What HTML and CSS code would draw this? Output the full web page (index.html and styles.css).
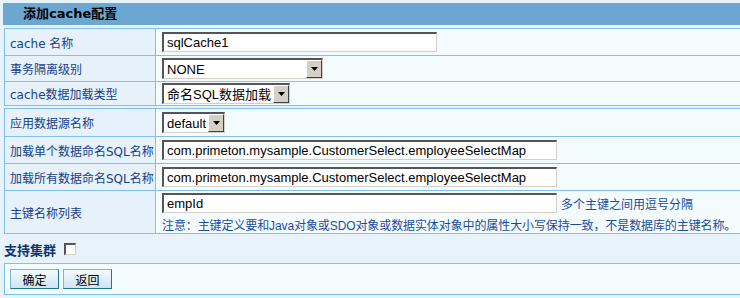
FILE: index.html
```html
<!DOCTYPE html>
<html lang="zh-CN">
<head>
    <meta charset="UTF-8">
    <title>添加cache配置</title>
    <link rel="stylesheet" href="styles.css">
</head>
<body>
    <div class="page">
        <div class="title">添加cache配置</div>

        <table class="form">
            <tr class="r1">
                <td class="label">cache 名称</td>
                <td class="value"><input type="text" class="text w-name" value="sqlCache1"></td>
            </tr>
            <tr class="r2">
                <td class="label">事务隔离级别</td>
                <td class="value">
                    <span class="combo w-none">
                        <select><option>NONE</option></select>
                        <span class="arrow"><svg width="7" height="4" viewBox="0 0 7 4"><path d="M0 0h7L3.5 4z" fill="#000"/></svg></span>
                    </span>
                </td>
            </tr>
            <tr class="r3">
                <td class="label">cache数据加载类型</td>
                <td class="value">
                    <span class="combo w-type">
                        <select><option>命名SQL数据加载</option></select>
                        <span class="arrow"><svg width="7" height="4" viewBox="0 0 7 4"><path d="M0 0h7L3.5 4z" fill="#000"/></svg></span>
                    </span>
                </td>
            </tr>
        </table>

        <table class="form second">
            <tr class="r4">
                <td class="label">应用数据源名称</td>
                <td class="value">
                    <span class="combo w-ds">
                        <select><option>default</option></select>
                        <span class="arrow"><svg width="7" height="4" viewBox="0 0 7 4"><path d="M0 0h7L3.5 4z" fill="#000"/></svg></span>
                    </span>
                </td>
            </tr>
            <tr class="r5">
                <td class="label">加载单个数据命名SQL名称</td>
                <td class="value"><input type="text" class="text w-long" value="com.primeton.mysample.CustomerSelect.employeeSelectMap"></td>
            </tr>
            <tr class="r6">
                <td class="label">加载所有数据命名SQL名称</td>
                <td class="value"><input type="text" class="text w-long" value="com.primeton.mysample.CustomerSelect.employeeSelectMap"></td>
            </tr>
            <tr class="r7">
                <td class="label">主键名称列表</td>
                <td class="value">
                    <div class="keys">
                        <input type="text" class="text w-long" value="empId">
                        <span class="hint">多个主键之间用逗号分隔</span>
                    </div>
                    <div class="note">注意：主键定义要和Java对象或SDO对象或数据实体对象中的属性大小写保持一致，不是数据库的主键名称。</div>
                </td>
            </tr>
        </table>

        <div class="cluster">
            <span>支持集群</span>
            <span class="check"></span>
        </div>

        <div class="actions">
            <button type="button">确定</button>
            <button type="button">返回</button>
        </div>
    </div>
</body>
</html>
```

FILE: styles.css
```css
body {
    margin: 0;
    background-color: #e8f2fa;
    font-family: "DejaVu Sans", "Noto Sans CJK SC", sans-serif;
    font-size: 12px;
    color: #17408a;
}
.page {
    padding-top: 3px;
    width: 740px;
    overflow: hidden;
}
.title {
    margin-left: 3px;
    height: 22px;
    line-height: 22px;
    padding-left: 20px;
    background-color: #6ba7d0;
    color: #000;
    font-weight: bold;
    font-size: 13px;
}
.form {
    margin: 3px 0 0 4px;
    width: 740px;
    border-collapse: collapse;
}
.form.second {
    margin-top: 2px;
}
.form td {
    border: 1px solid #80c1f1;
    padding: 0;
}
.label {
    width: 145px;
    padding-left: 5px !important;
    background-color: #e6f1f9;
    white-space: nowrap;
}
.value {
    padding-left: 6px !important;
    background-color: #f4fbfd;
}
.r1 td { height: 26px; }
.r2 td { height: 25px; }
.r3 td { height: 23px; }
.r4 td { height: 27px; }
.r5 td { height: 26px; }
.r6 td { height: 26px; }
.r7 td { height: 42px; }

.text {
    box-sizing: border-box;
    height: 20px;
    padding: 0 3px;
    margin: 0;
    border-style: solid;
    border-width: 2px 1px 1px 2px;
    border-color: #555 #d4d0c8 #d4d0c8 #555;
    background: #fff;
    font-family: "Liberation Sans", "Noto Sans CJK SC", sans-serif;
    font-size: 13px;
    color: #000;
    vertical-align: middle;
}
.w-name { width: 275px; }
.w-long { width: 395px; }

.combo {
    box-sizing: border-box;
    display: inline-flex;
    align-items: stretch;
    height: 21px;
    border-style: solid;
    border-width: 2px 1px 1px 2px;
    border-color: #555 #d4d0c8 #d4d0c8 #555;
    background: #fff;
    vertical-align: middle;
}
.combo select {
    appearance: none;
    -webkit-appearance: none;
    flex: 1;
    min-width: 0;
    border: none;
    padding: 0 0 0 3px;
    margin: 0;
    background: #fff;
    font-family: "Liberation Sans", "Noto Sans CJK SC", sans-serif;
    font-size: 13px;
    color: #000;
    outline: none;
}
.combo .arrow {
    box-sizing: border-box;
    width: 16px;
    display: flex;
    align-items: center;
    justify-content: center;
    background: #d4d0c8;
    border-style: solid;
    border-width: 1px;
    border-color: #fff #404040 #404040 #fff;
}
.w-none { width: 161px; }
.w-type { width: 128px; }
.w-ds { width: 63px; }

.keys {
    display: flex;
    align-items: center;
    gap: 4px;
    margin-top: 2px;
}
.hint {
    color: #1a4c9e;
    white-space: nowrap;
}
.note {
    margin-top: 3px;
    color: #1a4c9e;
    white-space: nowrap;
    font-family: "Liberation Sans", "Noto Sans CJK SC", sans-serif;
    letter-spacing: -0.1px;
}

.cluster {
    display: flex;
    align-items: center;
    gap: 8px;
    height: 28px;
    padding: 1px 0 0 4px;
    font-weight: bold;
    font-size: 13px;
    color: #0f3373;
}
.check {
    width: 12px;
    height: 12px;
    box-sizing: border-box;
    background: #fff;
    border-style: solid;
    border-width: 2px 1px 1px 2px;
    border-color: #555 #d4d0c8 #d4d0c8 #555;
}

.actions {
    margin-left: 4px;
    height: 30px;
    display: flex;
    align-items: center;
    gap: 4px;
    padding-left: 5px;
    border: 1px solid #80c1f1;
    border-right: none;
    background-color: #f4fbfd;
}
.actions button {
    width: 49px;
    height: 20px;
    padding: 0;
    border: 1px solid #1c7b89;
    border-top-color: #7ab8c4;
    border-left-color: #7ab8c4;
    background: linear-gradient(#f4fafd, #cfe4f1);
    font-family: "Noto Sans CJK SC", sans-serif;
    font-size: 12px;
    color: #000;
    cursor: pointer;
}
```
